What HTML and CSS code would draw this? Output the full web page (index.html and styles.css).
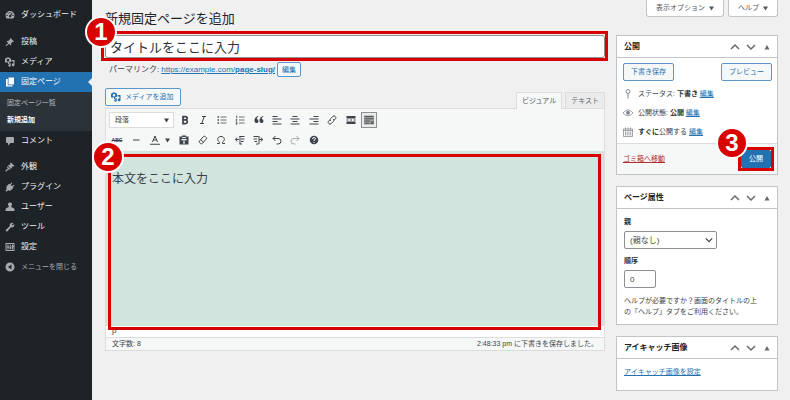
FILE: index.html
```html
<!DOCTYPE html>
<html lang="ja">
<head>
<meta charset="utf-8">
<title>新規固定ページを追加</title>
<meta name="viewport" content="width=device-width, initial-scale=1">
<link rel="stylesheet" href="styles.css">
</head>
<body>
<svg class="sprite" aria-hidden="true">
  <symbol id="media" viewBox="0 0 20 20"><path d="M0 3h2l1.500-2h5L10 3h2v7H8.500v4H6v-3H0zM6 4a2.500 2.500 0 1 0 0 5a2.500 2.500 0 1 0 0-5zM13 6h6v10a2.800 2.800 0 1 1-2.300-2.800V9H13zM9.500 12h2v5a2.500 2.500 0 1 1-2-2.400z" fill-rule="evenodd"/></symbol>
  <symbol id="up" viewBox="0 0 10 10"><path d="M1 7l4-4 4 4" class="line"/></symbol>
  <symbol id="down" viewBox="0 0 10 10"><path d="M1 3l4 4 4-4" class="line"/></symbol>
  <symbol id="toggle" viewBox="0 0 10 10"><path d="M2.500 7.500h5L5 3z"/></symbol>
  <symbol id="caret" viewBox="0 0 10 10"><path d="M0 1h10L5 9z"/></symbol>
</svg>
<div class="layout">
  <nav class="menu" aria-label="メインメニュー">
    <a class="item" href="#"><svg viewBox="0 0 20 20"><path fill-rule="evenodd" d="M3.500 17A9 9 0 1 1 16.500 17zM9 4h2v2.500H9zM4.500 6l1.400-1.400 1.700 1.700-1.400 1.400zM3 10h2.500v2H3zM14.500 10H17v2h-2.500zM14 4.800l1.200 1.200-3.200 5.500a2.200 2.200 0 1 1-1.700-1.300z"/></svg>ダッシュボード</a>
    <div class="group">
      <a class="item" href="#"><svg viewBox="0 0 20 20"><path d="M11 2l7 7-1.500 1.200-1.200-.5-3 3c.6 1.800.2 3.200-.8 4.300l-3.300-3.300L2 19l-1-1 5.300-6.200L3 8.500c1-1 2.600-1.400 4.300-.8l3-3-.5-1.200z"/></svg>投稿</a>
      <a class="item" href="#"><svg><use href="#media"/></svg>メディア</a>
      <a class="item current" href="#" aria-current="page"><svg viewBox="0 0 20 20"><path d="M7 1h11v14H7z"/><path d="M2 4h3.500v12.500H15V19H2z"/></svg>固定ページ</a>
      <div class="submenu">
        <a href="#">固定ページ一覧</a>
        <a class="active" href="#">新規追加</a>
      </div>
      <a class="item" href="#"><svg viewBox="0 0 20 20"><path d="M4 2h12q2 0 2 2v8q0 2-2 2h-5l-5 5v-5H4q-2 0-2-2V4q0-2 2-2z"/></svg>コメント</a>
    </div>
    <div class="group last">
      <a class="item" href="#"><svg viewBox="0 0 20 20"><path d="M12 1l7 7-3 1.500-1-1-1.500 1.500 1 1-2.500 2.500-6-6L8.500 5l1 1L11 4.500l-1-1zM5 8.500l6 6-2 1-2-1L3 19H1v-2l4.500-4-1.500-2.500z"/></svg>外観</a>
      <a class="item" href="#"><svg viewBox="0 0 20 20"><path d="M13 1l1.500 1.500L11.500 6 14 8.500l3.500-3L19 7l-3.300 3.200 1.300 1.500-4 4c-2 2-5 2.300-7 1L3 19.500.8 17.300 3.500 14.500c-1.500-2-1-5 .8-7l4-4L10 4.500z"/></svg>プラグイン</a>
      <a class="item" href="#"><svg viewBox="0 0 20 20"><path d="M10 1a4 4 0 0 1 2.500 7.200V10L17 12q2 1 2 3v3H1v-3q0-2 2-3l4.500-2V8.200A4 4 0 0 1 10 1z"/></svg>ユーザー</a>
      <a class="item" href="#"><svg viewBox="0 0 20 20"><path d="M17 2l-3.500 3.200 1.300 1.600L18.500 4c1.200 4.500-2.500 7.800-6.500 6.500L5 18.500c-2 1.500-4.500-1-3-3L9.500 8.300C8.500 4 12 .5 17 2z"/></svg>ツール</a>
      <a class="item" href="#"><svg viewBox="0 0 20 20"><path fill-rule="evenodd" d="M1 2h18v16H1zM3 4v12h14V4zM5 5h2v4h1.500v2H7v4H5v-4H3.500V9H5zM9.500 5h2v6H13v2h-1.500v2h-2v-2H8.500v-2h1zM14 5h2v3h1v2h-1v5h-2v-5h-1V8h1z"/></svg>設定</a>
      <a class="item collapse" href="#"><svg viewBox="0 0 20 20"><path fill-rule="evenodd" d="M10 1a9 9 0 1 1 0 18a9 9 0 1 1 0-18zM13 5l-7 5 7 5z"/></svg>メニューを閉じる</a>
    </div>
  </nav>

  <main class="content">
    <header class="top">
      <h1>新規固定ページを追加</h1>
      <div class="meta-tabs">
        <button type="button">表示オプション <svg><use href="#caret"/></svg></button>
        <button type="button">ヘルプ <svg><use href="#caret"/></svg></button>
      </div>
    </header>

    <div class="columns">
      <div class="post">
        <div class="title-field">
          <input class="title" type="text" aria-label="タイトル" value="タイトルをここに入力">
          <span class="mark mark-title"></span>
          <b class="badge badge-title">1</b>
        </div>
        <div class="permalink">
          <span>パーマリンク:</span>
          <a href="#">https://example.com/<b>page-slug/</b></a>
          <button class="btn small" type="button">編集</button>
        </div>

        <div class="editor-tools">
          <button class="btn media" type="button"><svg><use href="#media"/></svg>メディアを追加</button>
          <div class="tabs">
            <button class="tab on" type="button">ビジュアル</button>
            <button class="tab" type="button">テキスト</button>
          </div>
        </div>

        <div class="editor">
          <div class="toolbar">
            <div class="row">
              <button class="format" type="button">段落 <svg><use href="#caret"/></svg></button>
              <div class="tools first">
                <button type="button" aria-label="太字"><svg viewBox="0 0 20 20"><path class="bold" d="M6 3v14h5.500a3.800 3.800 0 0 0 0-7.500H6h5a3.200 3.200 0 0 0 0-6.500z"/></svg></button>
                <button type="button" aria-label="イタリック"><svg viewBox="0 0 20 20"><path class="thick" d="M8 3h8M4 17h8M12.500 3l-5 14"/></svg></button>
                <button type="button" aria-label="番号なしリスト"><svg viewBox="0 0 20 20"><path class="thin" d="M7 4h12M7 10h12M7 16h12"/><path d="M1 2.500h3v3H1zM1 8.500h3v3H1zM1 14.500h3v3H1z"/></svg></button>
                <button type="button" aria-label="番号付きリスト"><svg viewBox="0 0 20 20"><path class="thin" d="M8 4h11M8 10h11M8 16h11M2 2h1.500v4M1.500 8.500h2.500L2 12h2.500M1.500 14.500H4v4H1.500M2 16.500h2"/></svg></button>
                <button type="button" aria-label="引用"><svg viewBox="0 0 20 20"><path d="M9 3C7 4 5.500 5.800 5.500 8A4 4 0 1 1 1 12C.5 7 4 3 8 2zM19 3c-2 1-3.500 2.800-3.500 5a4 4 0 1 1-4.500 4C10.500 7 14 3 18 2z"/></svg></button>
                <button type="button" aria-label="左寄せ"><svg viewBox="0 0 20 20"><path class="thick" d="M1 3h10M1 8h18M1 13h10M1 18h18"/></svg></button>
                <button type="button" aria-label="中央揃え"><svg viewBox="0 0 20 20"><path class="thick" d="M5 3h10M1 8h18M5 13h10M1 18h18"/></svg></button>
                <button type="button" aria-label="右寄せ"><svg viewBox="0 0 20 20"><path class="thick" d="M9 3h10M1 8h18M9 13h10M1 18h18"/></svg></button>
                <button type="button" aria-label="リンク"><svg viewBox="0 0 20 20"><path class="thick" d="M8 12l-1-1q-1.500-2 0-3.500l5-5q2-1.500 4 0l1 1q2 2 0 4L14 10.500M12 8l1 1q1.500 2 0 3.500l-5 5q-2 1.500-4 0l-1-1q-2-2 0-4L6 9.500"/></svg></button>
                <button type="button" aria-label="続きを読む"><svg viewBox="0 0 20 20"><path d="M1 2h18v5H1zM1 13h18v5H1zM1 9h4v2H1zM8 9h4v2H8zM15 9h4v2h-4z"/></svg></button>
                <button class="pressed" type="button" aria-label="ツールバー切り替え"><svg viewBox="0 0 20 20"><path d="M0 1h20v18H0z" opacity=".45"/><path class="thin" d="M1 3h18M1 7.500h18M1 12h10M1 16.500h10M13 12l5 5M18 12v5h-5"/></svg></button>
              </div>
            </div>
            <div class="row">
              <button type="button" aria-label="打ち消し"><span class="strike">ABC</span></button>
              <button type="button" aria-label="横ライン"><svg viewBox="0 0 20 20"><path class="thick" d="M4 10h13"/></svg></button>
              <button class="color" type="button" aria-label="テキスト色"><svg viewBox="0 0 20 20"><path class="thick" d="M5 14l5-12 5 12M7 10h6M0 18.500h20"/></svg><svg class="caret"><use href="#caret"/></svg></button>
              <div class="tools second">
                <button type="button" aria-label="テキストとしてペースト"><svg viewBox="0 0 20 20"><path fill-rule="evenodd" d="M1 3h5V1h8v2h5v16H1zM6 4v2h8V4zM5 8v3h2v-1h2v5H8v2h4v-2h-1v-5h2v1h2V8z"/></svg></button>
                <button type="button" aria-label="書式設定をクリア"><svg viewBox="0 0 20 20"><path class="thick" d="M3 12l8-9q1.500-1.500 3.500 0l2 2q1.500 1.500 0 3l-8 9q-1.500 1.500-3 0l-2.500-2q-1.500-1.500 0-3zM5.500 9.500l5.500 5"/></svg></button>
                <button type="button" aria-label="特殊文字"><svg viewBox="0 0 20 20"><path class="thick" d="M2 17h5v-2.500C1.500 11 2 3 10 3s8.500 8 3 11.500V17h5"/></svg></button>
                <button type="button" aria-label="インデントを減らす"><svg viewBox="0 0 20 20"><path class="thick" d="M9 3h10M12 8h7M12 13h5M9 18h5M10 2v16M1 9h7M4 5L1 9l3 4"/></svg></button>
                <button type="button" aria-label="インデントを増やす"><svg viewBox="0 0 20 20"><path class="thick" d="M1 3h10M1 8h7M3 13h5M6 18h5M12 2v16M12 9h7M16 5l3 4-3 4"/></svg></button>
                <button type="button" aria-label="取り消し"><svg viewBox="0 0 20 20"><path class="thick" d="M7 2L2 7l5 5M2 7h10q6 0 6 5.500T12 18H9"/></svg></button>
                <button class="off" type="button" aria-label="やり直し" disabled><svg viewBox="0 0 20 20"><path class="thick" d="M13 2l5 5-5 5M18 7H8q-6 0-6 5.500T8 18h3"/></svg></button>
                <button type="button" aria-label="キーボードショートカット"><svg viewBox="0 0 20 20"><circle cx="10" cy="10" r="8.500"/><path class="cut" d="M7 8q0-3 3-3t3 2.500q0 1.500-3 3V12M10 14v2"/></svg></button>
              </div>
            </div>
          </div>
          <div class="body">
            <textarea aria-label="本文" spellcheck="false">本文をここに入力</textarea>
            <div class="path">p</div>
            <span class="mark mark-body"></span>
            <b class="badge badge-body">2</b>
          </div>
          <div class="status"><span>文字数: 8</span><span>2:48:33 pm に下書きを保存しました。</span></div>
        </div>
      </div>

      <aside class="side">
        <section class="box">
          <div class="box-head"><h2>公開</h2><svg><use href="#up"/></svg><svg><use href="#down"/></svg><svg><use href="#toggle"/></svg></div>
          <div class="publish">
            <div class="pair"><button class="btn" type="button">下書き保存</button><button class="btn" type="button">プレビュー</button></div>
            <p><svg viewBox="0 0 20 20"><path class="thick" d="M10 1a4 4 0 1 1 0 8a4 4 0 1 1 0-8zM10 9v10"/></svg><span>ステータス: <b>下書き</b> <a href="#">編集</a></span></p>
            <p><svg viewBox="0 0 20 20"><path class="thin" d="M0 10q10-13 20 0q-10 11-20 0z"/><circle cx="10" cy="9.500" r="4"/></svg><span>公開状態: <b>公開</b> <a href="#">編集</a></span></p>
            <p><svg viewBox="0 0 20 20"><path class="thin" d="M1 4h18v15H1zM1 7h18M5 1v4M10 1v4M15 1v4M5 9v8M8.500 9v8M12 9v8M15.500 9v8"/></svg><span><b>すぐに</b>公開する <a href="#">編集</a></span></p>
          </div>
          <div class="box-foot">
            <a class="trash" href="#">ゴミ箱へ移動</a>
            <span class="submit"><button class="btn primary" type="button">公開</button><span class="mark mark-publish"></span><b class="badge badge-publish">3</b></span>
          </div>
        </section>

        <section class="box">
          <div class="box-head"><h2>ページ属性</h2><svg><use href="#up"/></svg><svg><use href="#down"/></svg><svg><use href="#toggle"/></svg></div>
          <div class="attributes">
            <label for="parent">親</label>
            <div class="select"><select id="parent"><option>(親なし)</option></select><svg><use href="#down"/></svg></div>
            <label for="order">順序</label>
            <input id="order" type="text" value="0">
            <p>ヘルプが必要ですか？画面のタイトルの上の「ヘルプ」タブをご利用ください。</p>
          </div>
        </section>

        <section class="box">
          <div class="box-head"><h2>アイキャッチ画像</h2><svg><use href="#up"/></svg><svg><use href="#down"/></svg><svg><use href="#toggle"/></svg></div>
          <div class="thumb"><a href="#">アイキャッチ画像を設定</a></div>
        </section>
      </aside>
    </div>
  </main>
</div>
</body>
</html>
```
FILE: styles.css
```css
* { box-sizing: border-box; }
body {
  margin: 0;
  background: #f0f0f1;
  color: #3c434a;
  font: 8px/12px "Liberation Sans", "Noto Sans CJK JP", sans-serif;
}
button, input, select, textarea { margin: 0; font: inherit; color: inherit; }
button { padding: 0; border: 0; background: none; white-space: nowrap; }
h1, h2, p { margin: 0; }
a { color: #2271b1; }
svg { display: block; flex: none; fill: currentColor; }
.sprite { position: absolute; width: 0; height: 0; }
.line, .thin, .thick, .bold, .cut { fill: none; stroke: currentColor; stroke-width: 2; }
.line, .thin { stroke-width: 1.5; }
.bold { stroke-width: 3.5; }
.cut { stroke: #fff; }

.layout { display: flex; min-height: 100vh; }

/* Admin menu */
.menu { flex: 0 0 92px; padding-top: 5px; background: #1d2327; }
.menu a { color: #f0f0f1; text-decoration: none; white-space: nowrap; }
.group { margin-top: 7px; }
.last { margin-top: 6px; }
.item { position: relative; display: flex; align-items: center; gap: 6px; height: 20px; padding-left: 5px; }
.item svg { width: 10px; height: 10px; color: #a7aaad; }
.menu .current { background: #2271b1; color: #fff; }
.current svg { color: #fff; }
.current::after {
  content: "";
  position: absolute;
  right: 0;
  top: 6px;
  border: 4px solid transparent;
  border-left: 0;
  border-right-color: #f0f0f1;
}
.submenu { padding: 2px 7px 3px; background: #2c3338; font-size: 7px; line-height: 17px; }
.submenu a { display: block; color: #b4b9be; }
.submenu .active { color: #fff; font-weight: 700; }
.menu .collapse { color: #a7aaad; font-size: 7px; }

/* Page head */
.content { flex: 1; min-width: 0; padding: 0 12px 9px 13px; }
.top { display: flex; justify-content: space-between; align-items: flex-start; margin-bottom: 7px; }
h1 { padding-top: 10px; color: #1d2327; font-size: 13px; line-height: 18px; font-weight: 400; }
.meta-tabs { display: flex; gap: 4px; }
.meta-tabs button {
  display: flex;
  align-items: center;
  gap: 4px;
  height: 17px;
  padding: 0 9px;
  border: 1px solid #c3c4c7;
  border-top: 0;
  border-radius: 0 0 3px 3px;
  background: #fff;
  color: #50575e;
  font-size: 7px;
}
.meta-tabs svg { width: 5px; height: 5px; }
.columns { display: grid; grid-template-columns: minmax(0, 1fr) 162px; gap: 11px; align-items: start; }

/* Buttons */
.btn {
  height: 18px;
  padding: 0 6px;
  border: 1px solid #5b97c8;
  border-radius: 2px;
  background: #f6f7f7;
  color: #2271b1;
  font-size: 7px;
}
.small { height: 15px; padding: 0 4px; }
.primary { border-color: #2271b1; background: #2271b1; color: #fff; }

/* Title */
.title-field { position: relative; }
.title {
  display: block;
  width: 100%;
  height: 23px;
  padding: 0 4px;
  border: 1px solid #8c8f94;
  border-radius: 3px;
  background: #fff;
  color: #2c3338;
  font-size: 13px;
}
.permalink { display: flex; align-items: center; gap: 2px; height: 15px; margin: 4px 0 11px; padding-left: 4px; }

/* Editor */
.editor-tools { display: flex; justify-content: space-between; align-items: flex-start; }
.media { display: flex; align-items: center; gap: 4px; padding: 0 6px 0 5px; }
.media svg { width: 10px; height: 10px; }
.tabs { display: flex; gap: 3px; margin-top: 4px; }
.tab { height: 16px; padding: 0 5px; border: 1px solid #dcdcde; border-bottom: 0; background: #ebebec; color: #646970; font-size: 7px; }
.tab.on { position: relative; height: 17px; margin-bottom: -1px; background: #f6f7f7; color: #50575e; }
.editor { border: 1px solid #dcdcde; }
.toolbar { display: grid; gap: 4px; padding: 3px; background: #f6f7f7; }
.row { display: flex; gap: 3px; height: 16px; color: #3c434a; }
.row button { display: flex; flex: none; align-items: center; justify-content: center; width: 16px; height: 16px; }
.row svg { width: 10px; height: 10px; }
.row .format { justify-content: space-between; width: 65px; padding: 0 4px 0 5px; border: 1px solid #dcdcde; background: #fff; font-size: 7px; }
.format svg, .row .caret { width: 5px; height: 5px; }
.row .color { gap: 5px; width: 26px; }
.tools { display: flex; justify-content: space-between; }
.first { width: 200px; }
.second { width: 146px; }
.row .pressed { border: 1px solid #8c8f94; background: #ebebec; }
.row .off { color: #a7aaad; }
.strike { font-size: 5px; font-weight: 700; text-decoration: line-through; }
.body { position: relative; background: #fff; }
textarea {
  display: block;
  width: 100%;
  height: 175px;
  padding: 19px 6px;
  border: 0;
  background: #d1e4dd;
  color: #39414d;
  font-size: 12px;
  line-height: 18px;
  resize: none;
}
.path { height: 11px; padding-left: 6px; line-height: 9px; }
.status {
  display: flex;
  justify-content: space-between;
  padding: 0 6px;
  border-top: 1px solid #dcdcde;
  background: #f6f7f7;
  font-size: 7px;
}

/* Side boxes */
.side { display: grid; gap: 11px; }
.box { border: 1px solid #c3c4c7; background: #fff; }
.box-head { display: flex; align-items: center; gap: 6px; height: 22px; padding: 0 5px 0 7px; border-bottom: 1px solid #c3c4c7; }
h2 { flex: 1; color: #1d2327; font-size: 8px; line-height: 12px; }
.box-head svg { width: 10px; height: 10px; color: #646970; }
.publish { display: grid; gap: 7px; padding: 5px; font-size: 7px; }
.publish p { display: flex; align-items: center; gap: 5px; padding-left: 1px; }
.publish p svg { width: 10px; height: 10px; color: #82878c; }
.publish b { color: #2c3338; }
.pair { display: flex; justify-content: space-between; padding-left: 1px; }
.pair .btn { padding: 0 7px; }
.box-foot { display: flex; align-items: center; justify-content: space-between; height: 31px; padding: 0 6px; border-top: 1px solid #dcdcde; background: #f6f7f7; }
.trash { color: #b32d2e; font-size: 7px; }
.submit { position: relative; }
.primary { display: block; padding: 0 7px; }
.attributes { display: grid; justify-items: start; padding: 7px; font-size: 7px; line-height: 11px; }
.attributes label { margin-bottom: 3px; color: #2c3338; font-weight: 700; line-height: 12px; }
.attributes p { padding-right: 10px; }
.select { position: relative; width: 93px; margin-bottom: 6px; }
.select select, #order { width: 100%; height: 18px; padding: 0 5px; border: 1px solid #8c8f94; border-radius: 2px; background: #fff; font-size: 8px; }
.select select { display: block; appearance: none; }
.select svg { position: absolute; top: 5px; right: 4px; width: 8px; height: 8px; pointer-events: none; }
.attributes #order { width: 32px; margin-bottom: 7px; }
.thumb { padding: 7px 7px 12px; font-size: 7px; }

/* Numbered callouts */
.mark { position: absolute; border: 3px solid #d90000; pointer-events: none; }
.mark-title { inset: -4px -3px -3px -4px; }
.mark-body { inset: 3px 3px 7px 2px; }
.mark-publish { inset: -3px; }
.badge {
  position: absolute;
  width: 32px;
  height: 32px;
  border: 2px solid #fff;
  border-radius: 50%;
  background: #d90000;
  color: #fff;
  font-size: 24px;
  line-height: 28px;
  text-align: center;
}
.badge-title { left: -20px; top: -19px; }
.badge-body { left: -14px; top: -10px; }
.badge-publish { left: -25px; top: -23px; }
```
